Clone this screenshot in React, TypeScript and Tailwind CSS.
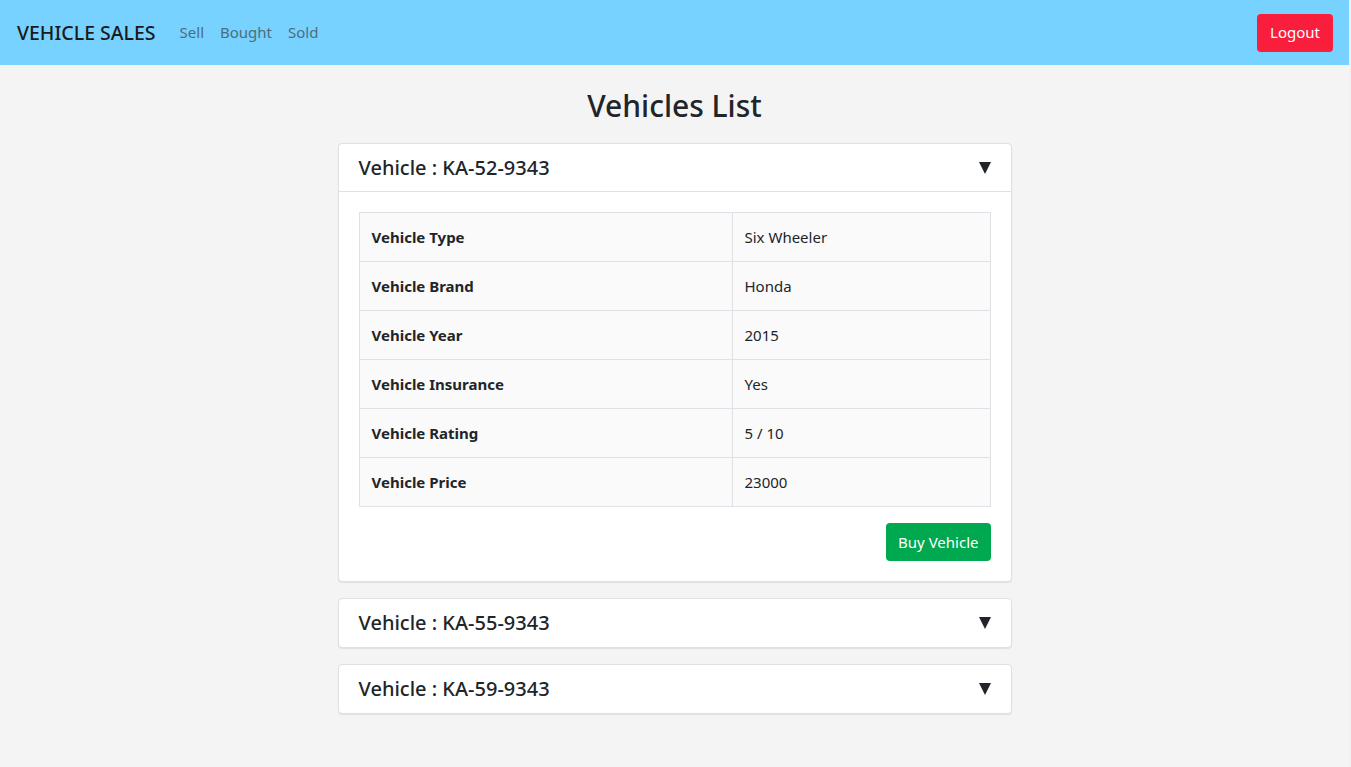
import React from "react";

const rows: [string, string][] = [
  ["Vehicle Type", "Six Wheeler"],
  ["Vehicle Brand", "Honda"],
  ["Vehicle Year", "2015"],
  ["Vehicle Insurance", "Yes"],
  ["Vehicle Rating", "5 / 10"],
  ["Vehicle Price", "23000"],
];

function Triangle() {
  return (
    <svg width="12" height="12" viewBox="0 0 12 12" className="shrink-0">
      <polygon points="0,0 12,0 6,12" fill="#212529" />
    </svg>
  );
}

function CardHeader({ title, bordered }: { title: string; bordered?: boolean }) {
  return (
    <div
      className={`flex items-center justify-between h-[48px] pl-5 pr-[20px] ${bordered ? "border-b border-[#dee2e6]" : ""}`}
    >
      <span className="text-[20px] text-[#212529] font-medium">{title}</span>
      <Triangle />
    </div>
  );
}

export default function App() {
  return (
    <div className="flex min-h-[767px] bg-[#f4f4f4]">
      <div
        className="w-[1349px] shrink-0 text-[#212529]"
        style={{ fontFamily: '"Noto Sans", "Open Sans", sans-serif' }}
      >
        <nav className="h-[65px] bg-[#77d2ff] flex items-center justify-between pl-[17px] pr-[16px]">
          <div className="flex items-center">
            <span className="text-[19.5px] font-medium text-[#1a1a1a] mr-[24px]">VEHICLE SALES</span>
            <div className="flex items-center gap-4 text-[15px] text-[#4b6d7e]">
              <span>Sell</span>
              <span>Bought</span>
              <span>Sold</span>
            </div>
          </div>
          <button className="h-[38px] px-[13px] rounded-[4px] bg-[#f91e3c] text-white text-[15px]">
            Logout
          </button>
        </nav>

        <main className="flex flex-col items-center">
          <h1 className="text-[30px] font-medium leading-[1.2] pt-[23px] pb-[19px]">Vehicles List</h1>

          <div className="w-[674px] flex flex-col gap-4">
            <div className="bg-white border border-[#e0e0e0] rounded-[4px] shadow-[0_1px_1px_rgba(0,0,0,0.08)]">
              <CardHeader title="Vehicle : KA-52-9343" bordered />
              <div className="p-5">
                <table className="w-full border-collapse bg-[#fafafa] text-[15px]">
                  <tbody>
                    {rows.map(([k, v]) => (
                      <tr key={k} className="h-[49px]">
                        <td className="border border-[#dee2e6] px-3 font-bold w-[373px]">{k}</td>
                        <td className="border border-[#dee2e6] px-3">{v}</td>
                      </tr>
                    ))}
                  </tbody>
                </table>
                <div className="flex justify-end mt-4">
                  <button className="h-[38px] px-3 rounded-[4px] bg-[#00a84f] text-white text-[15px]">
                    Buy Vehicle
                  </button>
                </div>
              </div>
            </div>

            <div className="bg-white border border-[#e0e0e0] rounded-[4px] shadow-[0_1px_1px_rgba(0,0,0,0.08)]">
              <CardHeader title="Vehicle : KA-55-9343" />
            </div>
            <div className="bg-white border border-[#e0e0e0] rounded-[4px] shadow-[0_1px_1px_rgba(0,0,0,0.08)]">
              <CardHeader title="Vehicle : KA-59-9343" />
            </div>
          </div>
        </main>
      </div>
      <div className="flex-1 bg-[#f1f1f1]" />
    </div>
  );
}
